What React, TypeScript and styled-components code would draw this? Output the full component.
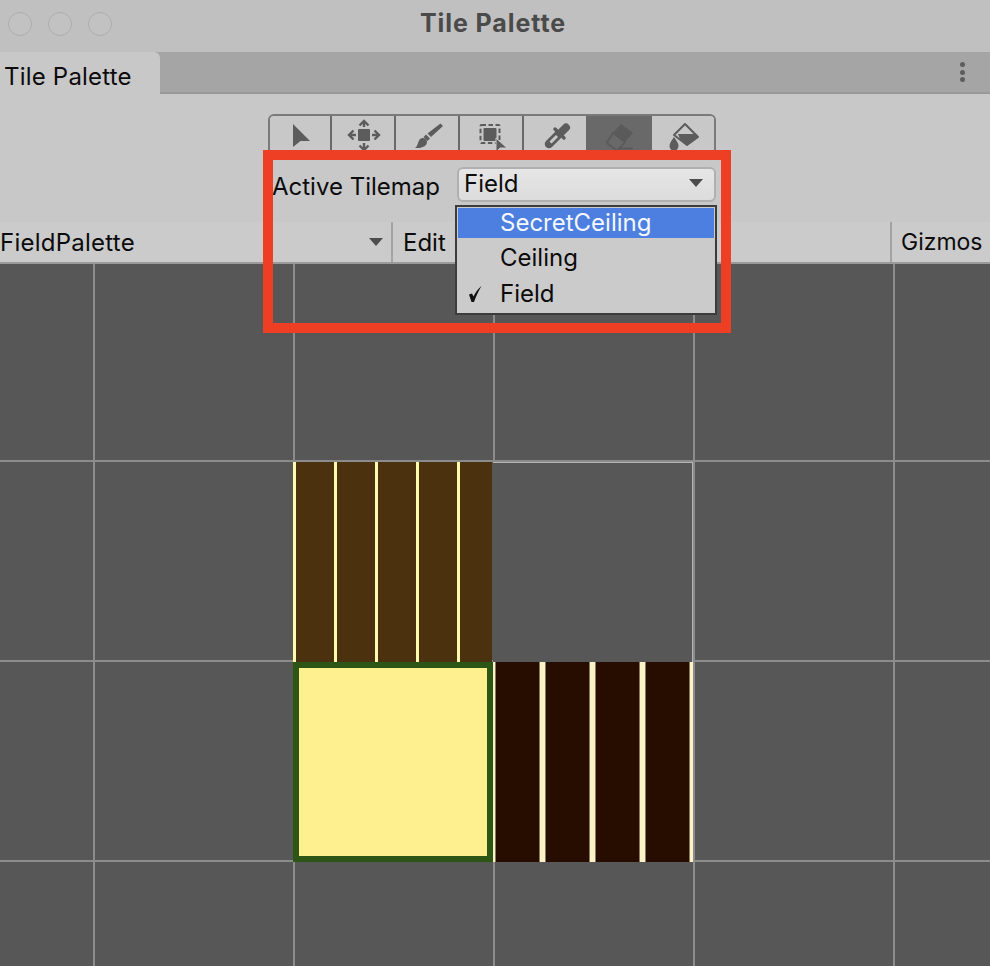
import React from "react";
import styled, { createGlobalStyle } from "styled-components";

const Global = createGlobalStyle`
  html, body { margin: 0; padding: 0; background: #575757; }
  body { font-family: Inter, "Liberation Sans", sans-serif; }
`;

const Page = styled.div`
  position: relative;
  width: 990px;
  height: 966px;
  overflow: hidden;
  display: flex;
  flex-direction: column;
  color: #0c0c0c;
  font-family: Inter, "Liberation Sans", sans-serif;
  font-size: 24px;
`;

const TitleBar = styled.header`
  height: 52px;
  flex: none;
  box-sizing: border-box;
  padding: 0 4px 6px 0;
  background: #c0c0c0;
  display: flex;
  align-items: center;
  justify-content: center;
  position: relative;
`;

const Traffic = styled.div`
  position: absolute;
  left: 8px;
  top: 12px;
  display: flex;
  gap: 16px;
`;

const TrafficDot = styled.span`
  width: 24px;
  height: 24px;
  box-sizing: border-box;
  border-radius: 50%;
  background: #c2c2c2;
  border: 1px solid #adadad;
`;

const Title = styled.h1`
  margin: 0;
  font-size: 25px;
  font-weight: 700;
  letter-spacing: 0.9px;
  color: #4a4a4a;
  font-family: Inter, "Liberation Sans", sans-serif;
`;

const TabStrip = styled.div`
  height: 42px;
  flex: none;
  box-sizing: border-box;
  background: #a5a5a5;
  border-bottom: 2px solid #999;
  display: flex;
  justify-content: space-between;
`;

const Tab = styled.div`
  width: 160px;
  height: 42px;
  box-sizing: border-box;
  padding: 5px 0 0 4px;
  background: #c8c8c8;
  border-top-right-radius: 6px;
  line-height: 40px;
  letter-spacing: 0.2px;
`;

const Kebab = styled.div`
  display: flex;
  flex-direction: column;
  gap: 2.5px;
  margin: 10px 25px 0 0;
`;

const KebabDot = styled.span`
  width: 5px;
  height: 5px;
  border-radius: 50%;
  background: #5d5d5d;
`;

const Panel = styled.section`
  height: 128px;
  flex: none;
  box-sizing: border-box;
  background: #c8c8c8;
  padding: 20px 0 0 268px;
`;

const ToolGroup = styled.div`
  display: flex;
  width: 448px;
  height: 42px;
  box-sizing: border-box;
  border: 2px solid #7a7a7a;
  border-bottom: 0;
  border-radius: 6px 6px 0 0;
  overflow: hidden;
`;

const ToolButton = styled.div<{ $active?: boolean }>`
  width: 60px;
  flex: none;
  display: flex;
  align-items: flex-start;
  justify-content: center;
  background: ${(p) => (p.$active ? "#696969" : "#c8c8c8")};
  & + & {
    width: 62px;
    border-left: 2px solid ${(p) => (p.$active ? "#696969" : "#7a7a7a")};
  }
`;

const ActiveRow = styled.div`
  display: flex;
  align-items: center;
  height: 35px;
  margin: 11px 0 0 4px;
`;

const ActiveLabel = styled.span`
  width: 185px;
  flex: none;
  padding-top: 3px;
`;

const Select = styled.div`
  width: 259px;
  height: 35px;
  box-sizing: border-box;
  padding: 0 11px 3px 5px;
  display: flex;
  align-items: center;
  justify-content: space-between;
  border: 2px solid #b0b0b0;
  border-radius: 6px;
  background: linear-gradient(#e6e6e6, #dcdcdc);
`;

const Arrow = styled.span`
  width: 0;
  height: 0;
  border-left: 7px solid transparent;
  border-right: 7px solid transparent;
  border-top: 8px solid #4d4d4d;
`;

const SecondBar = styled.div`
  height: 42px;
  flex: none;
  box-sizing: border-box;
  background: #cbcbcb;
  border-bottom: 2px solid #9a9a9a;
  display: flex;
  align-items: center;
`;

const PaletteCell = styled.div`
  width: 391px;
  height: 100%;
  flex: none;
  box-sizing: border-box;
  padding: 0 8px 0 0;
  display: flex;
  align-items: center;
  justify-content: space-between;
  letter-spacing: 0.25px;
`;

const BarCell = styled.div<{ $grow?: boolean }>`
  height: 100%;
  box-sizing: border-box;
  border-left: 2px solid #a3a3a3;
  padding-left: ${(p) => (p.$grow ? "10px" : "9px")};
  display: flex;
  align-items: center;
  flex: ${(p) => (p.$grow ? "1" : "none")};
  width: ${(p) => (p.$grow ? "auto" : "100px")};
  font-size: ${(p) => (p.$grow ? "24px" : "23px")};
`;

const Canvas = styled.main`
  position: relative;
  flex: 1;
  background-color: #575757;
  background-image:
    linear-gradient(90deg, #8c8c8c 2px, transparent 2px),
    linear-gradient(#8c8c8c 2px, transparent 2px);
  background-size: 200px 200px;
  background-position: 93px -4px;
`;

const Tile = styled.div<{ $col: number; $row: number }>`
  position: absolute;
  left: ${(p) => 293 + p.$col * 200}px;
  top: ${(p) => 198 + p.$row * 200}px;
  width: 200px;
  height: 200px;
  box-sizing: border-box;
`;

const WoodTile = styled(Tile)`
  background-color: #4b310d;
  background-image: repeating-linear-gradient(90deg, #fdfbad 0 3px, #4b310d 3px 41px);
  width: 199px;
`;

const EmptyTile = styled(Tile)`
  border: 1px solid #b4b4b4;
  border-left: 0;
  border-bottom: 0;
  background: #575757;
`;

const SandTile = styled(Tile)`
  background: #fff08f;
  border: 6px solid #2d5515;
`;

const DarkTile = styled(Tile)`
  background-color: #270d00;
  background-image: repeating-linear-gradient(
    90deg,
    #fbf3c8 0 2px,
    #8a7a5c 2px 3px,
    #270d00 3px 46px,
    #8a7a5c 46px 47px,
    #fbf3c8 47px 50px
  );
`;

const Highlight = styled.div`
  position: absolute;
  left: 263px;
  top: 150px;
  width: 468px;
  height: 183px;
  box-sizing: border-box;
  border: 10px solid #ee3f24;
  pointer-events: none;
`;

const Menu = styled.ul`
  position: absolute;
  left: 455px;
  top: 205px;
  width: 262px;
  height: 110px;
  box-sizing: border-box;
  margin: 0;
  padding: 1px;
  list-style: none;
  background: #cbcbcb;
  border: 2px solid #3c3c3c;
`;

const MenuItem = styled.li<{ $selected?: boolean }>`
  height: ${(p) => (p.$selected ? "30px" : "36px")};
  box-sizing: border-box;
  padding: ${(p) => (p.$selected ? "0 0 2px 42px" : "2px 0 0 42px")};
  position: relative;
  display: flex;
  align-items: center;
  background: ${(p) => (p.$selected ? "#4d7fe0" : "transparent")};
  color: ${(p) => (p.$selected ? "#f4f7fd" : "#0c0c0c")};
`;

const Check = styled.svg`
  position: absolute;
  left: 9px;
  top: 11px;
`;

const ICON = "#5c5c5c";
const ICON_ON_ACTIVE = "#5a5a5a";

const Pointer = () => (
  <svg width="60" height="36" viewBox="0 0 60 36">
    <path d="M23 8L40 25H30.5L23 31z" fill={ICON} />
  </svg>
);

const Move = () => (
  <svg width="60" height="36" viewBox="0 0 60 36" fill="none" stroke={ICON} strokeWidth="2.4">
    <rect x="25" y="13" width="12" height="12" rx="1" fill={ICON} stroke="none" />
    <path d="M31 5v6M26.5 9.5L31 5l4.500 4.500M31 27v7M26.500 29.500L31 34l4.500-4.500M23 19h-7M20.500 14.500L16 19l4.500 4.500M39 19h7M41.500 14.500L46 19l-4.500 4.500" />
  </svg>
);

const Brush = () => (
  <svg width="60" height="36" viewBox="0 0 60 36">
    <path d="M43.500 7.500l2.500 2.500-12 11-3.500-3.500z" fill={ICON} />
    <path d="M29 18.500l4 4-2.500 2.500-4-4z" fill={ICON} />
    <path d="M23 23c3-2.500 7-.5 7 3 0 4-5 6.500-12 6 3-2 2.500-6 5-9z" fill={ICON} />
  </svg>
);

const BoxSelect = () => (
  <svg width="60" height="36" viewBox="0 0 60 36">
    <rect x="19.500" y="9" width="19" height="18" rx="1" fill="none" stroke={ICON} strokeWidth="2" strokeDasharray="4.500 2.500" />
    <rect x="22.500" y="12" width="13" height="13" rx="1" fill={ICON} />
    <path d="M35 22l11 10h-7l-4 4z" fill={ICON} stroke="#c8c8c8" strokeWidth="1" />
  </svg>
);

const Dropper = () => (
  <svg width="60" height="36" viewBox="0 0 60 36" fill="none" strokeLinecap="round">
    <path d="M36.500 16l4.500-4.500" stroke={ICON} strokeWidth="8" />
    <path d="M30 13l9 9" stroke={ICON} strokeWidth="3.500" />
    <path d="M24 28l9-9" stroke={ICON} strokeWidth="8.500" />
    <path d="M25.500 26.500l6.500-6.500" stroke="#c8c8c8" strokeWidth="3" strokeLinecap="butt" />
  </svg>
);

const Eraser = () => (
  <svg width="60" height="36" viewBox="0 0 60 36">
    <path d="M32 8l12 9-8 9-12-9z" fill={ICON_ON_ACTIVE} />
    <path d="M24 17l12 9-7 8h-2l-8-6c-1-1-1-2 0-3z" fill="none" stroke={ICON_ON_ACTIVE} strokeWidth="1.800" />
    <path d="M29 32.500h15" stroke={ICON_ON_ACTIVE} strokeWidth="2" />
  </svg>
);

const Bucket = () => (
  <svg width="60" height="36" viewBox="0 0 60 36">
    <path d="M32 8L45 21 34 29 21 19z" fill="none" stroke={ICON} strokeWidth="2" strokeLinejoin="round" />
    <path d="M25 18h18l2 3-11 8-7-6z" fill={ICON} />
    <path d="M21 21c3.500 5 4.500 7 4.500 9a4.500 4.500 0 0 1-9 0c0-2 1-4 4.500-9z" fill={ICON} />
  </svg>
);

export default function App() {
  return (
    <Page>
      <Global />
      <TitleBar>
        <Traffic>
          <TrafficDot />
          <TrafficDot />
          <TrafficDot />
        </Traffic>
        <Title>Tile Palette</Title>
      </TitleBar>
      <TabStrip>
        <Tab>Tile Palette</Tab>
        <Kebab>
          <KebabDot />
          <KebabDot />
          <KebabDot />
        </Kebab>
      </TabStrip>
      <Panel>
        <ToolGroup>
          <ToolButton><Pointer /></ToolButton>
          <ToolButton><Move /></ToolButton>
          <ToolButton><Brush /></ToolButton>
          <ToolButton><BoxSelect /></ToolButton>
          <ToolButton><Dropper /></ToolButton>
          <ToolButton $active><Eraser /></ToolButton>
          <ToolButton><Bucket /></ToolButton>
        </ToolGroup>
        <ActiveRow>
          <ActiveLabel>Active Tilemap</ActiveLabel>
          <Select>
            Field
            <Arrow />
          </Select>
        </ActiveRow>
      </Panel>
      <SecondBar>
        <PaletteCell>
          FieldPalette
          <Arrow />
        </PaletteCell>
        <BarCell $grow>Edit</BarCell>
        <BarCell>Gizmos</BarCell>
      </SecondBar>
      <Canvas>
        <WoodTile $col={0} $row={0} />
        <EmptyTile $col={1} $row={0} />
        <SandTile $col={0} $row={1} />
        <DarkTile $col={1} $row={1} />
      </Canvas>
      <Menu>
        <MenuItem $selected>SecretCeiling</MenuItem>
        <MenuItem>Ceiling</MenuItem>
        <MenuItem>
          <Check width="16" height="18" viewBox="0 0 16 18">
            <path d="M2 9.500l3 -1 1.500 3C8.500 7 11 4 14.500 1 11.500 6 9 11 7 17H4.500z" fill="#111" />
          </Check>
          Field
        </MenuItem>
      </Menu>
      <Highlight />
    </Page>
  );
}
